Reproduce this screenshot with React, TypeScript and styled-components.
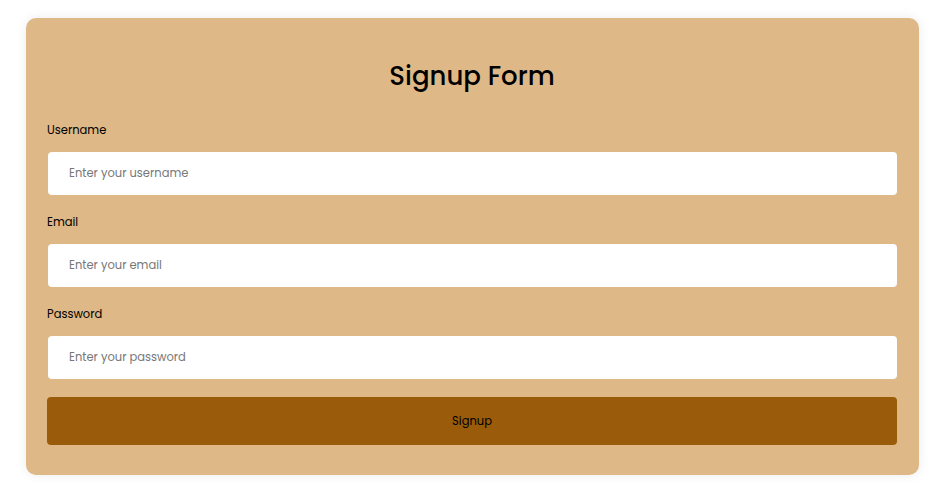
import React from "react";
import styled, { createGlobalStyle } from "styled-components";

const Global = createGlobalStyle`
  html, body { margin: 0; padding: 0; background: #ffffff; }
  body { font-family: "Poppins", "Inter", "Noto Sans", sans-serif; }
  * { box-sizing: border-box; }
`;

const Page = styled.div`
  padding: 18px 22px 16px 26px;
`;

const Card = styled.form`
  background: #deb887;
  border-radius: 10px;
  box-shadow: 0 0 12px rgba(0, 0, 0, 0.08);
  padding: 39px 22px 30px 21px;
  display: flex;
  flex-direction: column;
`;

const Title = styled.h2`
  margin: 0 0 25px 0;
  text-align: center;
  font-size: 26px;
  line-height: 39px;
  font-weight: 500;
  color: #000;
`;

const Field = styled.div`
  display: flex;
  flex-direction: column;
  gap: 13px;
  margin-bottom: 18px;
`;

const Label = styled.label`
  font-size: 11.5px;
  line-height: 18px;
  color: #000;
`;

const Input = styled.input`
  height: 43px;
  border: none;
  border-radius: 4px;
  background: #fff;
  padding: 0 21px;
  font-family: inherit;
  font-size: 11.5px;
  color: #333;
  outline: none;
  margin-left: 1px;
  &::placeholder { color: #777; }
`;

const Button = styled.button`
  height: 48px;
  border: none;
  border-radius: 4px;
  background: #9a5c0a;
  color: #000;
  font-family: inherit;
  font-size: 11.5px;
  cursor: pointer;
`;

export default function App() {
  return (
    <Page>
      <Global />
      <Card onSubmit={(e) => e.preventDefault()}>
        <Title>Signup Form</Title>
        <Field>
          <Label>Username</Label>
          <Input type="text" placeholder="Enter your username" />
        </Field>
        <Field>
          <Label>Email</Label>
          <Input type="email" placeholder="Enter your email" />
        </Field>
        <Field>
          <Label>Password</Label>
          <Input type="password" placeholder="Enter your password" />
        </Field>
        <Button type="submit">Signup</Button>
      </Card>
    </Page>
  );
}
